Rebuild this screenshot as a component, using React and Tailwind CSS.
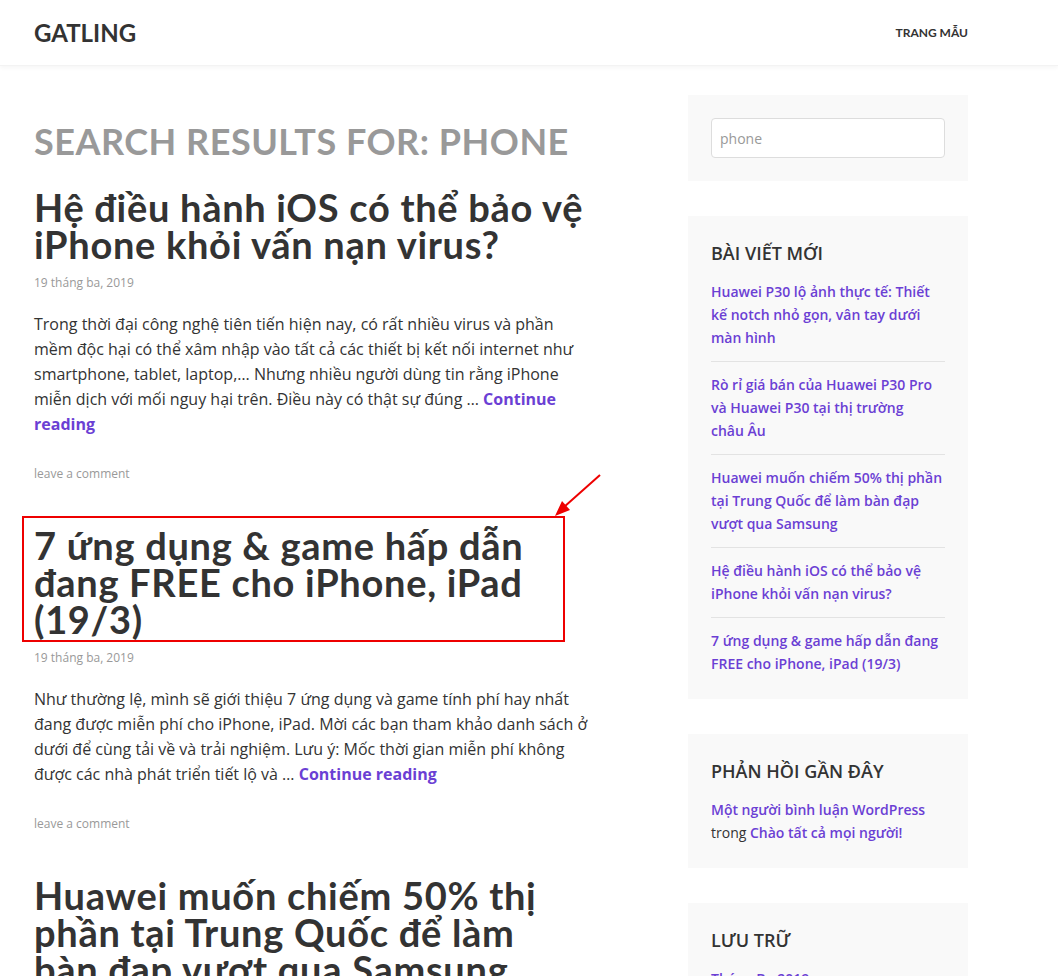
import React from "react";

const recent = [
  "Huawei P30 lộ ảnh thực tế: Thiết kế notch nhỏ gọn, vân tay dưới màn hình",
  "Rò rỉ giá bán của Huawei P30 Pro và Huawei P30 tại thị trường châu\u00a0Âu",
  "Huawei muốn chiếm 50% thị phần tại Trung Quốc để làm bàn đạp vượt qua Samsung",
  "Hệ điều hành iOS có thể bảo vệ iPhone khỏi vấn nạn virus?",
  "7 ứng dụng & game hấp dẫn đang FREE cho iPhone, iPad (19/3)",
];

const body = "font-['Open_Sans','Noto_Sans',sans-serif]";

function Post({ title, excerpt, marked }) {
  return (
    <article className="mb-[44px]">
      <div className="relative">
        <h2 className="text-[38px] leading-[37px] font-bold text-[#333] tracking-[0.7px]">{title}</h2>
        {marked && (
          <>
            <div className="absolute left-[-12px] top-[-11px] w-[543px] h-[126px] border-2 border-[#ee0000]" />
            <svg className="absolute left-[518px] top-[-53px]" width="50" height="45" viewBox="0 0 50 45">
              <line x1="48" y1="1" x2="12" y2="33" stroke="#ee0000" strokeWidth="2" />
              <polygon points="3,42 10,27 18,36" fill="#ee0000" />
            </svg>
          </>
        )}
      </div>
      <div className={`mt-[11px] text-[12px] text-[#999] ${body}`}>19 tháng ba, 2019</div>
      <p className={`mt-[20px] text-[16px] leading-[25px] text-[#333] ${body}`}>
        {excerpt} …{" "}
        <a className="font-bold text-[#6b3fd4]">Continue reading</a>
      </p>
      <div className={`mt-[28px] text-[12px] text-[#999] ${body}`}>leave a comment</div>
    </article>
  );
}

export default function App() {
  return (
    <div className="min-h-screen bg-white font-['Lato','Noto_Sans',sans-serif] text-[#333]">
      <header className="h-[66px] bg-white shadow-[0_2px_4px_rgba(0,0,0,0.04)] border-b border-[#f3f3f3]">
        <div className="w-[934px] ml-[34px] h-full flex items-center justify-between">
          <div className="text-[24px] font-bold text-[#333]">GATLING</div>
          <div className="text-[12px] font-bold text-[#333]">TRANG MẪU</div>
        </div>
      </header>

      <div className="w-[934px] ml-[34px] flex gap-[98px] pt-[29px]">
        <main className="w-[556px]">
          <h1 className="mt-[24px] text-[36px] leading-[44px] font-bold text-[#999] tracking-[0.5px]">
            SEARCH RESULTS FOR: PHONE
          </h1>
          <div className="mt-[26px]">
            <Post
              title="Hệ điều hành iOS có thể bảo vệ iPhone khỏi vấn nạn virus?"
              excerpt="Trong thời đại công nghệ tiên tiến hiện nay, có rất nhiều virus và phần mềm độc hại có thể xâm nhập vào tất cả các thiết bị kết nối internet như smartphone, tablet, laptop,… Nhưng nhiều người dùng tin rằng iPhone miễn dịch với mối nguy hại trên. Điều này có thật sự đúng"
            />
            <Post
              marked
              title="7 ứng dụng & game hấp dẫn đang FREE cho iPhone, iPad (19/3)"
              excerpt="Như thường lệ, mình sẽ giới thiệu 7 ứng dụng và game tính phí hay nhất đang được miễn phí cho iPhone, iPad. Mời các bạn tham khảo danh sách ở dưới để cùng tải về và trải nghiệm. Lưu ý: Mốc thời gian miễn phí không được các nhà phát triển tiết lộ và"
            />
            <h2 className="text-[38px] leading-[37px] font-bold text-[#333] tracking-[0.7px]">
              Huawei muốn chiếm 50% thị phần tại Trung Quốc để làm bàn{"\u00a0"}đạp vượt qua Samsung
            </h2>
          </div>
        </main>

        <aside className={`w-[280px] flex flex-col gap-[35px] ${body}`}>
          <div className="bg-[#f9f9f9] px-[23px] py-[23px]">
            <input
              readOnly
              placeholder="phone"
              className="w-full h-[40px] rounded-[4px] border border-[#dddddd] bg-white px-[8px] text-[14px] placeholder:text-[#999] outline-none"
            />
          </div>

          <div className="bg-[#f9f9f9] px-[23px] pt-[24px] pb-[24px]">
            <h3 className="text-[18px] font-semibold text-[#333]">BÀI VIẾT MỚI</h3>
            <ul className="mt-[13px]">
              {recent.map((r, i) => (
                <li
                  key={i}
                  className={`text-[14px] leading-[23px] font-semibold text-[#6b3fd4] ${i > 0 ? "border-t border-[#e3e3e3] pt-[11px]" : ""} ${i < recent.length - 1 ? "pb-[12px]" : ""}`}
                >
                  {r}
                </li>
              ))}
            </ul>
          </div>

          <div className="bg-[#f9f9f9] px-[23px] pt-[24px] pb-[24px]">
            <h3 className="text-[18px] font-semibold text-[#333]">PHẢN HỒI GẦN ĐÂY</h3>
            <p className="mt-[13px] text-[14px] leading-[23px]">
              <a className="font-semibold text-[#6b3fd4]">Một người bình luận WordPress</a>{" "}
              trong <a className="font-semibold text-[#6b3fd4]">Chào tất cả mọi người!</a>
            </p>
          </div>

          <div className="bg-[#f9f9f9] px-[23px] pt-[24px] pb-[24px]">
            <h3 className="text-[18px] font-semibold text-[#333]">LƯU TRỮ</h3>
            <p className="mt-[13px] text-[14px] leading-[23px] font-semibold text-[#6b3fd4]">Tháng Ba 2019</p>
          </div>
        </aside>
      </div>
    </div>
  );
}
